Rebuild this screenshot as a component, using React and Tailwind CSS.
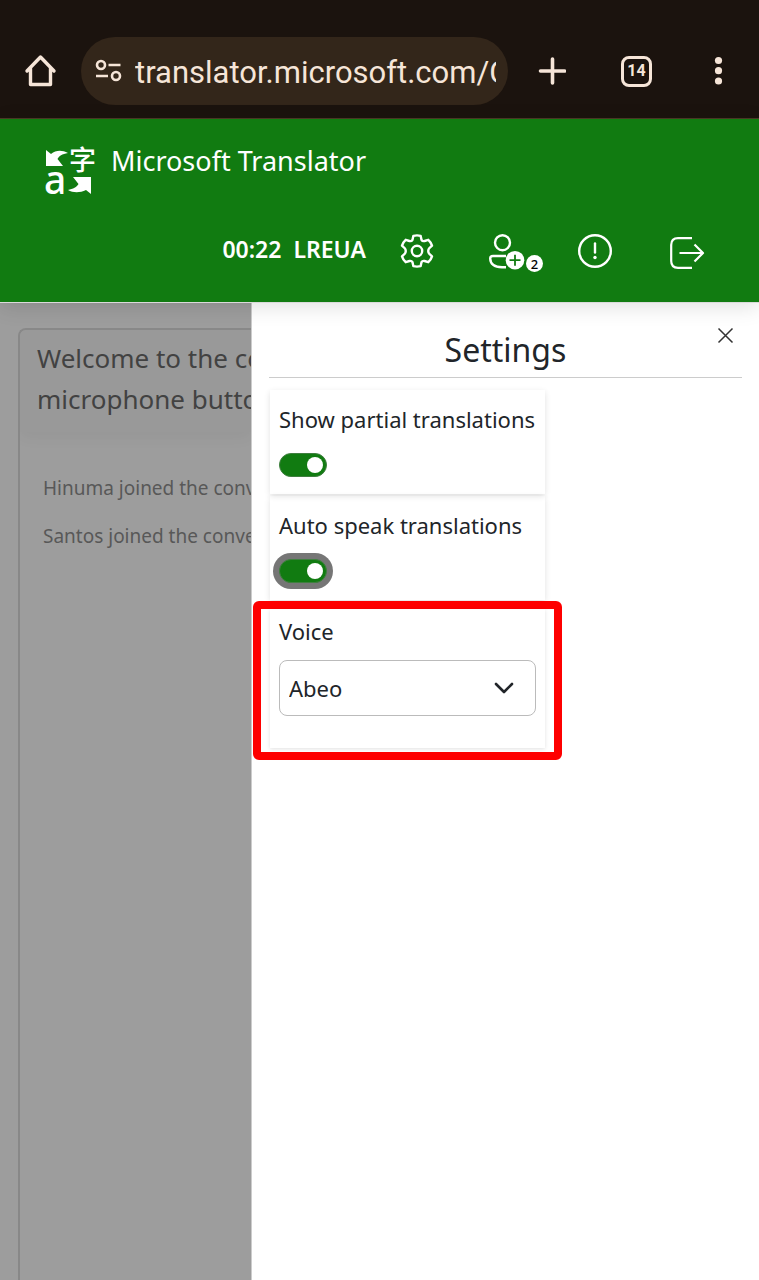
import React, { useState } from "react";

const Logo = () => (
  <svg className="overflow-visible" width="52" height="52" viewBox="0 0 52 52" fill="#fff" aria-hidden="true">
    <path d="M2 5 L7 9 C12 5 18 5 24 8 C18 9 15 11 13.500 14 L19 21 H2 Z" />
    <path d="M47 49 L42 45 C36 48 29 48 24 45 C29 44 33 42 34.500 39 L29 32 H47 Z" />
    <text x="25" y="25" fontSize="27" fontWeight="500" fontFamily="'Noto Sans CJK SC', sans-serif">字</text>
    <text x="0" y="49" fontSize="39" fontWeight="500" fontFamily="'Noto Sans', sans-serif">a</text>
  </svg>
);

const BrowserBar = () => (
  <div className="flex h-[119px] items-center bg-[#1b130e] border-b border-[#4b3b26] pt-6 pl-6 pr-4 text-[#f6e5d8]">
    <button aria-label="Home" className="shrink-0">
      <svg width="33" height="34" viewBox="0 0 33 34" fill="none" stroke="currentColor" strokeWidth="3.400" strokeLinejoin="round" strokeLinecap="round">
        <path d="M3 17 L16.500 3 L30 17 M6.500 14.500 V30.500 H26.500 V14.500" />
      </svg>
    </button>
    <div className="ml-6 flex h-[68px] min-w-0 flex-1 items-center rounded-full bg-[#33261a] pl-[14px] pr-3">
      <svg className="shrink-0" width="27" height="24" viewBox="0 0 27 24" fill="none" stroke="currentColor" strokeWidth="2.600">
        <circle cx="6" cy="6" r="4" />
        <circle cx="21" cy="17" r="4" />
        <path d="M13.500 6 H25.500 M1 17 H13" />
      </svg>
      <span className="ml-[13px] flex-1 overflow-hidden whitespace-nowrap pt-1 font-['Roboto',sans-serif] text-[31px] leading-10">
        translator.microsoft.com/C
      </span>
    </div>
    <button aria-label="New tab" className="ml-[30px] shrink-0">
      <svg width="28" height="28" viewBox="0 0 28 28" fill="none" stroke="currentColor" strokeWidth="3.600" strokeLinecap="round">
        <path d="M14.500 2 V26 M2.500 14 H26.500" />
      </svg>
    </button>
    <button className="ml-[55px] flex size-[31px] shrink-0 items-center justify-center rounded-lg border-3 border-current font-['Roboto',sans-serif] text-base font-bold">
      14
    </button>
    <button aria-label="Menu" className="ml-[55px] mr-[14px] shrink-0">
      <svg width="22" height="30" viewBox="0 0 22 30" fill="currentColor">
        <circle cx="11.500" cy="4.500" r="3.600" />
        <circle cx="11.500" cy="14.700" r="3.600" />
        <circle cx="11.500" cy="25" r="3.600" />
      </svg>
    </button>
  </div>
);

const Header = () => (
  <header className="relative z-10 h-[184px] border-b border-[#dadada] bg-[#117b11] pt-[26px] text-white shadow-[0_4px_20px_rgba(0,0,0,0.12)]">
    <div className="flex items-start gap-[15px] pl-11">
      <Logo />
      <h1 className="text-[27px] leading-8">Microsoft Translator</h1>
    </div>
    <div className="mt-9 flex items-start justify-end pr-[54px]">
      <span className="text-[23px] leading-8 font-semibold">00:22</span>
      <span className="ml-3 text-[23px] leading-8 font-semibold">LREUA</span>
      <button aria-label="Settings" className="ml-[34px]">
        <svg width="34" height="36" viewBox="0 0 34 36" fill="none" stroke="currentColor" strokeWidth="2.400" strokeLinejoin="round">
          <circle cx="17" cy="18" r="5.200" />
          <path d="M13.400 2.800 Q17 2 20.600 2.800 L21.500 6.800 Q22.500 8.500 24.500 8 L28.300 6.800 Q31 9.200 32 12.600 L29 15.500 Q27.500 18 29 20.500 L32 23.400 Q31 26.800 28.300 29.200 L24.500 28 Q22.500 27.500 21.500 29.200 L20.600 33.200 Q17 34 13.400 33.200 L12.500 29.200 Q11.500 27.500 9.500 28 L5.700 29.200 Q3 26.800 2 23.400 L5 20.500 Q6.500 18 5 15.500 L2 12.600 Q3 9.200 5.700 6.800 L9.500 8 Q11.500 8.500 12.500 6.800 Z" />
        </svg>
      </button>
      <button className="ml-[54px] flex items-end">
        <svg width="37" height="38" viewBox="0 0 37 38" fill="none" stroke="currentColor" strokeWidth="2.400">
          <circle cx="14.500" cy="9.700" r="7.500" />
          <path d="M18 23 H5 Q2.200 23 2.200 25.500 Q2.500 34 14 34.300 H18" />
          <circle cx="27" cy="27.200" r="9.300" fill="currentColor" stroke="none" />
          <path d="M27 21.700 V32.700 M21.500 27.200 H32.500" stroke="#117b11" strokeWidth="1.800" />
        </svg>
        <span className="-mb-px ml-px flex size-[17px] items-center justify-center rounded-full bg-white text-[13px] leading-4 font-medium text-black">
          2
        </span>
      </button>
      <button aria-label="Info" className="ml-[34px]">
        <svg width="36" height="36" viewBox="0 0 36 36" fill="none" stroke="currentColor" strokeWidth="2.400" strokeLinecap="round">
          <circle cx="18" cy="18" r="15.800" />
          <path d="M18 10.500 V19.500" />
          <circle cx="18" cy="24.500" r="1.700" fill="currentColor" stroke="none" />
        </svg>
      </button>
      <button aria-label="Leave" className="ml-14">
        <svg width="36" height="36" viewBox="0 0 36 36" fill="none" stroke="currentColor" strokeWidth="2.200" strokeLinejoin="round">
          <path d="M23 5.200 H9 Q2.200 5.200 2.200 12 V28 Q2.200 34.800 9 34.800 H23" />
          <path d="M10.500 20 H34 M25.500 11.500 L34 20 L25.500 28.500" />
        </svg>
      </button>
    </div>
  </header>
);

const Conversation = () => (
  <main className="flex flex-col overflow-hidden bg-[#9d9d9d] pt-[25px] pl-[18px] whitespace-nowrap">
    <div className="flex-1 overflow-hidden rounded-tl-lg border-t-2 border-l-2 border-[#888]">
      <div className="bg-[#999] pt-2 pb-3 pl-[17px] text-[26px] leading-[41px] text-[#424242] shadow-[0_4px_16px_rgba(0,0,0,0.05)]">
        <p>Welcome to the co</p>
        <p>microphone butto</p>
      </div>
      <div className="mt-8 pl-[23px] text-[19px] leading-[48px] text-[#585858]">
        <p>Hinuma joined the conv</p>
        <p>Santos joined the conve</p>
      </div>
    </div>
  </main>
);

const Toggle = ({ id, label, focused }) => {
  const [on, setOn] = useState(true);

  return (
    <div className="mb-0.5 h-[104px] px-[9px] pt-[11px] shadow-[0_2px_6px_rgba(0,0,0,0.12)]">
      <label htmlFor={id} className="block text-[22px] leading-9 whitespace-nowrap">
        {label}
      </label>
      <input
        id={id}
        type="checkbox"
        role="switch"
        checked={on}
        onChange={() => setOn(!on)}
        className={
          "mt-4 block h-6 w-12 appearance-none rounded-full border border-[#3f7f3f] bg-gray-400 outline-none before:mt-[3px] before:ml-1 before:block before:size-4 before:rounded-full before:bg-white checked:bg-[#117b11] checked:before:ml-[27px] " +
          (focused ? "ring-[6px] ring-[#767676]" : "")
        }
      />
    </div>
  );
};

const SettingsPanel = () => (
  <aside className="border-l border-[#ccc] bg-white px-[17px] text-[#212529]">
    <div className="grid grid-cols-[1fr_auto_1fr] border-b border-[#ccc] pt-6 pb-1">
      <h2 className="col-start-2 text-[32px] leading-[46px]">Settings</h2>
      <button aria-label="Close" className="mr-2 self-start justify-self-end">
        <svg width="17" height="17" viewBox="0 0 17 17" fill="none" stroke="#333" strokeWidth="1.500">
          <path d="M1.500 1.500 L15.500 15.500 M15.500 1.500 L1.500 15.500" />
        </svg>
      </button>
    </div>

    <div className="mt-3 ml-px w-[275px]">
      <Toggle id="partial" label="Show partial translations" />
      <Toggle id="autospeak" label="Auto speak translations" focused />
      {/* highlighted voice picker */}
      <div className="-mt-px -ml-[17px] h-[159px] w-[309px] rounded-md border-8 border-[#fe0000] px-[9px]">
        <div className="h-[139px] px-[9px] pt-1 shadow-[0_1px_4px_rgba(0,0,0,0.12)]">
          <label htmlFor="voice" className="block text-[22px] leading-9">
            Voice
          </label>
          <div className="mt-[11px] grid items-center">
            <select
              id="voice"
              className="col-start-1 row-start-1 h-14 w-full appearance-none rounded-lg border border-[#bbb] bg-white px-[9px] text-[22px]"
            >
              <option>Abeo</option>
            </select>
            <svg className="pointer-events-none col-start-1 row-start-1 mr-[22px] justify-self-end" width="20" height="14" viewBox="0 0 20 14" fill="none" stroke="#212529" strokeWidth="2.600" strokeLinecap="round" strokeLinejoin="round">
              <path d="M2 3 L10 11 L18 3" />
            </svg>
          </div>
        </div>
      </div>
    </div>
  </aside>
);

const App = () => {
  return (
    <div className="flex min-h-screen flex-col bg-white font-['Noto_Sans',sans-serif]">
      <BrowserBar />
      <Header />
      <div className="grid flex-1 grid-cols-[251fr_508fr]">
        <Conversation />
        <SettingsPanel />
      </div>
    </div>
  );
};

export default App;
